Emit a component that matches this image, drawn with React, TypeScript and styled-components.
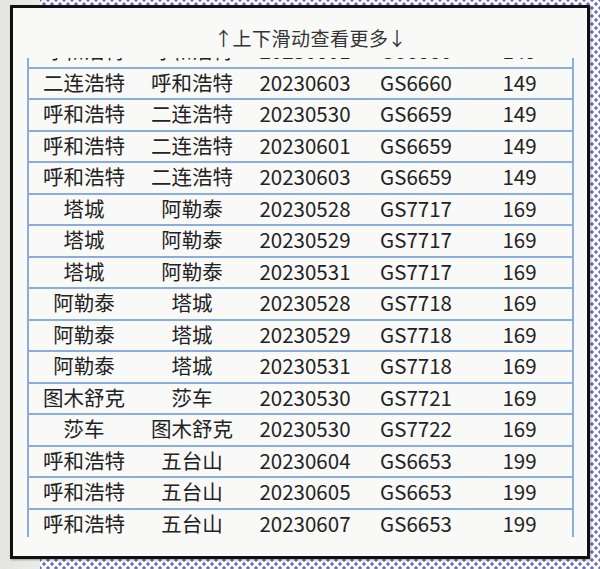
import React, { useLayoutEffect, useRef } from 'react'
import styled, { createGlobalStyle } from 'styled-components'

const GlobalStyle = createGlobalStyle`
    html, body {
        margin: 0;
        padding: 0;
    }
    body {
        font-family: "Noto Sans CJK SC", "Noto Sans", sans-serif;
        color: #222;
    }
`

type Flight = [string, string, string, string, string]

const rows: Flight[] = [
    ['呼和浩特', '呼和浩特', '20230601', 'GS6660', '149'],
    ['二连浩特', '呼和浩特', '20230603', 'GS6660', '149'],
    ['呼和浩特', '二连浩特', '20230530', 'GS6659', '149'],
    ['呼和浩特', '二连浩特', '20230601', 'GS6659', '149'],
    ['呼和浩特', '二连浩特', '20230603', 'GS6659', '149'],
    ['塔城', '阿勒泰', '20230528', 'GS7717', '169'],
    ['塔城', '阿勒泰', '20230529', 'GS7717', '169'],
    ['塔城', '阿勒泰', '20230531', 'GS7717', '169'],
    ['阿勒泰', '塔城', '20230528', 'GS7718', '169'],
    ['阿勒泰', '塔城', '20230529', 'GS7718', '169'],
    ['阿勒泰', '塔城', '20230531', 'GS7718', '169'],
    ['图木舒克', '莎车', '20230530', 'GS7721', '169'],
    ['莎车', '图木舒克', '20230530', 'GS7722', '169'],
    ['呼和浩特', '五台山', '20230604', 'GS6653', '199'],
    ['呼和浩特', '五台山', '20230605', 'GS6653', '199'],
    ['呼和浩特', '五台山', '20230607', 'GS6653', '199'],
]

const App = () => {
    const scrollRef = useRef<HTMLDivElement>(null)

    useLayoutEffect(() => {
        if (scrollRef.current) scrollRef.current.scrollTop = 21
    }, [])

    return (
        <>
            <GlobalStyle />
            <Page>
                <Panel>
                    <Title>
                        <Arrow>↑</Arrow>上下滑动查看更多<Arrow>↓</Arrow>
                    </Title>
                    <TableScroll ref={scrollRef}>
                        {rows.map((r, i) => (
                            <Row key={i}>
                                {r.map((cell, j) => (
                                    <Cell key={j}>{cell}</Cell>
                                ))}
                            </Row>
                        ))}
                    </TableScroll>
                </Panel>
            </Page>
        </>
    )
}

export default App

const Cell = styled.div`
    display: flex;
    align-items: center;
    justify-content: center;
    padding-bottom: 3px;
    white-space: nowrap;
    font-size: 20.5px;
    line-height: 1;
`
const Row = styled.div`
    display: grid;
    grid-template-columns: 110px 106px 120px 102px 1fr;
    height: 31.5px;
    box-sizing: border-box;
    border-bottom: 2px solid #8aaedc;
`
const TableScroll = styled.div`
    height: 479px;
    overflow-y: auto;
    scrollbar-width: none;
    border-left: 2px solid #8aaedc;
    border-right: 2px solid #8aaedc;
    &::-webkit-scrollbar {
        display: none;
    }
`
const Arrow = styled.span`
    margin: 0 -1px;
`
const Title = styled.div`
    height: 50px;
    box-sizing: border-box;
    padding-top: 20px;
    padding-left: 20px;
    display: flex;
    justify-content: center;
    font-size: 19px;
    line-height: 1;
    letter-spacing: 0.5px;
    color: #333;
`
const Panel = styled.div`
    width: 580px;
    height: 554px;
    box-sizing: border-box;
    margin: 5px 0 0 10px;
    padding: 0 13px 0 14px;
    background-color: #f9f9f8;
    border: 3px solid #111;
    box-shadow: 1px 1px 2px rgba(0, 0, 0, 0.35);
`
const Page = styled.div`
    width: 600px;
    height: 569px;
    overflow: hidden;
    box-sizing: border-box;
    padding-top: 0.1px;
    background:
        linear-gradient(to right, #e4e4e2 0, #ebebea 40px, transparent 40px),
        radial-gradient(circle, #6f70b4 1.4px, transparent 1.9px) 0 0 / 8px 8px,
        radial-gradient(circle, #6f70b4 1.4px, transparent 1.9px) 4px 4px / 8px 8px,
        #fbfbfd;
`
